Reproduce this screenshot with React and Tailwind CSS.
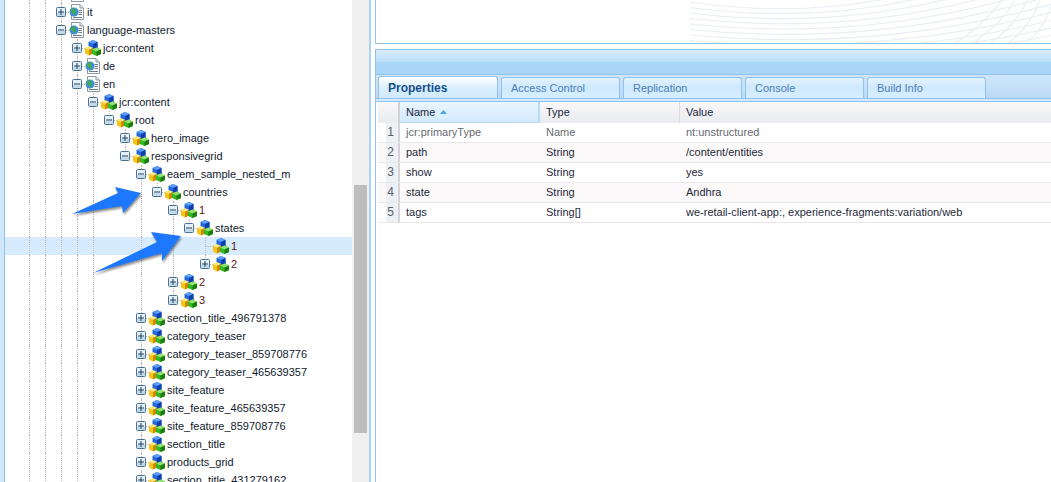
const base = [0, 1, 2, 3, 4];
const rows = [
  { c: 2, t: "page", o: "plus", n: "", g: [0, 1] },
  { c: 2, t: "page", o: "plus", n: "it", g: [0, 1] },
  { c: 2, t: "page", o: "minus", n: "language-masters", g: [0, 1] },
  { c: 3, t: "node", o: "plus", n: "jcr:content", g: [0, 1, 2] },
  { c: 3, t: "page", o: "plus", n: "de", g: [0, 1, 2] },
  { c: 3, t: "page", o: "minus", n: "en", g: [0, 1, 2] },
  { c: 4, t: "node", o: "minus", n: "jcr:content", g: [0, 1, 2, 3] },
  { c: 5, t: "node", o: "minus", n: "root", g: base, last: true },
  { c: 6, t: "node", o: "plus", n: "hero_image", g: base },
  { c: 6, t: "node", o: "minus", n: "responsivegrid", g: base, last: true },
  { c: 7, t: "node", o: "minus", n: "eaem_sample_nested_m", g: base },
  { c: 8, t: "node", o: "minus", n: "countries", g: [...base, 7], last: true },
  { c: 9, t: "node", o: "minus", n: "1", g: [...base, 7], red: true },
  { c: 10, t: "node", o: "minus", n: "states", g: [...base, 7, 9], last: true },
  { c: 11, t: "node", o: "leaf", n: "1", g: [...base, 7, 9], red: true, sel: true },
  { c: 11, t: "node", o: "plus", n: "2", g: [...base, 7, 9], red: true, last: true },
  { c: 9, t: "node", o: "plus", n: "2", g: [...base, 7], red: true },
  { c: 9, t: "node", o: "plus", n: "3", g: [...base, 7], red: true, last: true },
  { c: 7, t: "node", o: "plus", n: "section_title_496791378", g: base },
  { c: 7, t: "node", o: "plus", n: "category_teaser", g: base },
  { c: 7, t: "node", o: "plus", n: "category_teaser_859708776", g: base },
  { c: 7, t: "node", o: "plus", n: "category_teaser_465639357", g: base },
  { c: 7, t: "node", o: "plus", n: "site_feature", g: base },
  { c: 7, t: "node", o: "plus", n: "site_feature_465639357", g: base },
  { c: 7, t: "node", o: "plus", n: "site_feature_859708776", g: base },
  { c: 7, t: "node", o: "plus", n: "section_title", g: base },
  { c: 7, t: "node", o: "plus", n: "products_grid", g: base },
  { c: 7, t: "node", o: "plus", n: "section_title_431279162", g: base },
];

const props = [
  ["1", "jcr:primaryType", "Name", "nt:unstructured", true],
  ["2", "path", "String", "/content/entities"],
  ["3", "show", "String", "yes"],
  ["4", "state", "String", "Andhra"],
  ["5", "tags", "String[]", "we-retail-client-app:, experience-fragments:variation/web"],
];

const tabs = ["Access Control", "Replication", "Console", "Build Info"];

function Toggle({ kind }) {
  return (
    <svg width="10" height="10" viewBox="0 0 10 10" className="relative block">
      <rect x="0.5" y="0.5" width="9" height="9" rx="1" fill="#e6f0f8" stroke="#47718f" />
      <rect x="1" y="6" width="8" height="3" fill="#c5d9e8" />
      <rect x="2" y="4.5" width="6" height="1" fill="#1d3f5c" />
      {kind === "plus" && <rect x="4.5" y="2" width="1" height="6" fill="#1d3f5c" />}
    </svg>
  );
}

function NodeIcon() {
  return (
    <svg width="16" height="16" viewBox="0 0 16 16" className="block shrink-0">
      <path d="M3.5 2 L8 0 L12.5 2 V8 L8 10 L3.5 8 Z" fill="#2168e0" />
      <path d="M3.5 2 L8 0 L12.5 2 L8 4 Z" fill="#5fa0f8" />
      <path d="M8 4 L12.5 2 V8 L8 10 Z" fill="#0f3fae" />
      <path d="M0 8 L4 6.2 L8 8 V13.5 L4 15.5 L0 13.5 Z" fill="#f7c511" />
      <path d="M0 8 L4 6.2 L8 8 L4 9.8 Z" fill="#fdeb8c" />
      <path d="M4 9.8 L8 8 V13.5 L4 15.5 Z" fill="#c98a05" />
      <path d="M7 9.5 L11.5 7.5 L16 9.5 V14 L11.5 16 L7 14 Z" fill="#38b81f" />
      <path d="M7 9.5 L11.5 7.5 L16 9.5 L11.5 11.5 Z" fill="#92e372" />
      <path d="M11.5 11.5 L16 9.5 V14 L11.5 16 Z" fill="#1b7d10" />
    </svg>
  );
}

function PageIcon() {
  return (
    <svg width="16" height="16" viewBox="0 0 16 16" className="block shrink-0">
      <path d="M2.5 0.5 H11 L14.5 4 V15.5 H2.5 Z" fill="#fdfdfd" stroke="#8d98a3" />
      <path d="M11 0.5 V4 H14.5" fill="#dfe5ea" stroke="#8d98a3" />
      <path d="M9.5 6.5 H13 M9.5 8.5 H13 M9.5 10.5 H13 M4 13.5 H13" stroke="#6d7a87" />
      <circle cx="5" cy="8" r="4.5" fill="#3b8bdc" />
      <path d="M2 6 Q4.5 3.5 6.5 4.5 L5.5 6.5 L7 8.5 L5 11.5 L3.8 9 L1.8 8 Z" fill="#46ad3a" />
    </svg>
  );
}

function TreeRow({ row }) {
  const cols = Array.from({ length: row.c }, (_, i) => i);
  return (
    <div className={`flex h-[18px] items-stretch whitespace-nowrap pl-[21px] ${row.sel ? "bg-[#d6ebfd]" : ""}`}>
      {cols.map((i) => (
        <span key={i} className="relative w-4 shrink-0">
          {row.g.includes(i) && <span className="absolute bottom-0 left-2 top-0 border-l border-dotted border-[#c2b6b6]" />}
        </span>
      ))}
      <span className="relative flex w-4 shrink-0 items-center justify-center">
        <span className={`absolute left-2 top-0 border-l border-dotted border-[#c2b6b6] ${row.last ? "h-[9px]" : "bottom-0"}`} />
        <span className="absolute left-2 right-0 top-[9px] border-t border-dotted border-[#c2b6b6]" />
        {row.o !== "leaf" && <Toggle kind={row.o} />}
      </span>
      <span className="flex w-4 shrink-0 items-center">{row.t === "node" ? <NodeIcon /> : <PageIcon />}</span>
      <span className={`ml-[2px] text-[11px] leading-[18px] ${row.red ? "text-[#5c1414]" : "text-[#111a2e]"}`}>{row.n}</span>
    </div>
  );
}

function Arcs() {
  const lines = Array.from({ length: 11 }, (_, i) => i);
  const left = 631;
  return (
    <svg className="absolute right-0 top-0" width="420" height="43" viewBox="0 0 420 43" fill="none">
      {lines.map((i) => (
        <path
          key={i}
          d={`M ${690 - left} ${2 + i * 5.5} Q ${800 + i * 15 - left} ${18 + i * 6} ${900 + i * 30 - left} -4`}
          stroke="#e9eef3"
          strokeWidth="1.1"
        />
      ))}
      {[0, 1, 2, 3, 4].map((i) => (
        <path key={i} d={`M ${950 + i * 18 - left} 46 Q ${985 + i * 16 - left} 26 ${1005 + i * 12 - left} -4`} stroke="#eff2f5" strokeWidth="1.6" />
      ))}
    </svg>
  );
}

export default function App() {
  return (
    <div className="relative flex h-[482px] w-[1051px] overflow-hidden bg-white font-['Liberation_Sans',sans-serif]">
      <div className="w-[5px] shrink-0 border-r border-[#8fc2ef] bg-[#cfe6fb]" />
      <div className="w-[347px] shrink-0 overflow-hidden">
        <div className="-ml-[5px] -mt-[15px] w-[352px]">
          {rows.map((r, i) => (
            <TreeRow key={i} row={r} />
          ))}
        </div>
      </div>
      <div className="w-[17px] shrink-0 bg-[#f0f0f0] px-[2px] pt-[185px]">
        <div className="h-[248px] w-[13px] bg-[#bdbdbd]" />
      </div>
      <div className="flex min-w-0 flex-1 flex-col border-l-2 border-[#a9d2f5] pl-[4px]">
        <div className="relative h-[44px] shrink-0 overflow-hidden border-b border-l border-[#8fc2ef] bg-white">
          <Arcs />
        </div>
        <div className="h-[5px] shrink-0" />
        <div className="flex min-h-0 flex-1 flex-col border-l border-t border-[#8fc2ef]">
          <div className="h-[25px] shrink-0 border-b border-[#8fc2ef] bg-[linear-gradient(#d8ecfc_0%,#bcdff9_48%,#a9d5f6_50%,#a9d5f6_100%)]" />
          <div className="flex h-[24px] shrink-0 items-end gap-[3px] border-b border-[#8fc2ef] bg-[linear-gradient(#cfe6fa,#bcdaf4)] pl-[2px]">
            <div className="flex h-[22px] w-[120px] items-center rounded-t-[3px] border border-b-0 border-[#8fc2ef] bg-[linear-gradient(#ffffff_0%,#d8eefe_55%,#d2eafd_100%)] pl-[9px] text-[12px] font-bold text-[#15508c]">
              Properties
            </div>
            {tabs.map((t) => (
              <div
                key={t}
                className="flex h-[21px] w-[119px] items-center rounded-t-[3px] border border-b-0 border-[#8fc2ef] bg-[linear-gradient(#e4f3fe_0%,#cfe9fd_45%,#d6eeff_100%)] pl-[9px] text-[11px] text-[#4a7fb8]"
              >
                {t}
              </div>
            ))}
          </div>
          <div className="h-[2px] shrink-0 bg-[#d2eafd]" />
          <div className="min-h-0 flex-1 border-t border-[#8fc2ef] pl-[2px]">
            <div className="grid h-[21px] grid-cols-[22px_140px_140px_1fr] border-b border-[#ddd6d6] text-[11px] leading-[20px] text-[#1a2340]">
              <div className="border-r-2 border-[#cfd3d8] bg-[linear-gradient(#faf8f8,#e9ebef)]" />
              <div className="flex items-center gap-[5px] border-b border-r-2 border-[#b8dcf8] bg-[linear-gradient(#eaf6ff,#d2eafd)] pl-[6px]">
                Name
                <svg width="7" height="4" viewBox="0 0 7 4" className="block">
                  <path d="M3.5 0 L7 4 H0 Z" fill="#4aa6e6" />
                </svg>
              </div>
              <div className="border-r border-[#dcdde2] bg-[linear-gradient(#faf8f8,#e9ebef)] pl-[6px]">Type</div>
              <div className="bg-[linear-gradient(#faf8f8,#e9ebef)] pl-[6px]">Value</div>
            </div>
            {props.map(([n, a, b, v, dim], i) => (
              <div
                key={n}
                className={`grid h-[20px] grid-cols-[22px_140px_140px_1fr] border-b border-[#ebe6e7] text-[11px] leading-[19px] ${
                  i % 2 ? "bg-[#fbf9fa]" : "bg-white"
                } ${dim ? "text-[#666a72]" : "text-[#24283a]"}`}
              >
                <div className="flex justify-end">
                  <span className="w-[14px] border-r-2 border-[#d5d3d5] bg-[#edf1f5] pr-[4px] text-right text-[12px] text-[#5a5f68]">{n}</span>
                </div>
                <div className="pl-[6px]">{a}</div>
                <div className="pl-[6px]">{b}</div>
                <div className="pl-[6px]">{v}</div>
              </div>
            ))}
          </div>
        </div>
      </div>
      <svg className="pointer-events-none absolute left-0 top-0 drop-shadow-[1px_2px_1px_rgba(0,0,0,0.45)]" width="200" height="290" viewBox="0 0 200 290">
        <path d="M72 214 L118 193 L115 187 L141 193 L123 213 L122 206 Z" fill="#1e78ff" />
        <path d="M93 273 L157 242 L151 232 L181 236 L162 261 L162 253 Z" fill="#1e78ff" />
      </svg>
    </div>
  );
}
